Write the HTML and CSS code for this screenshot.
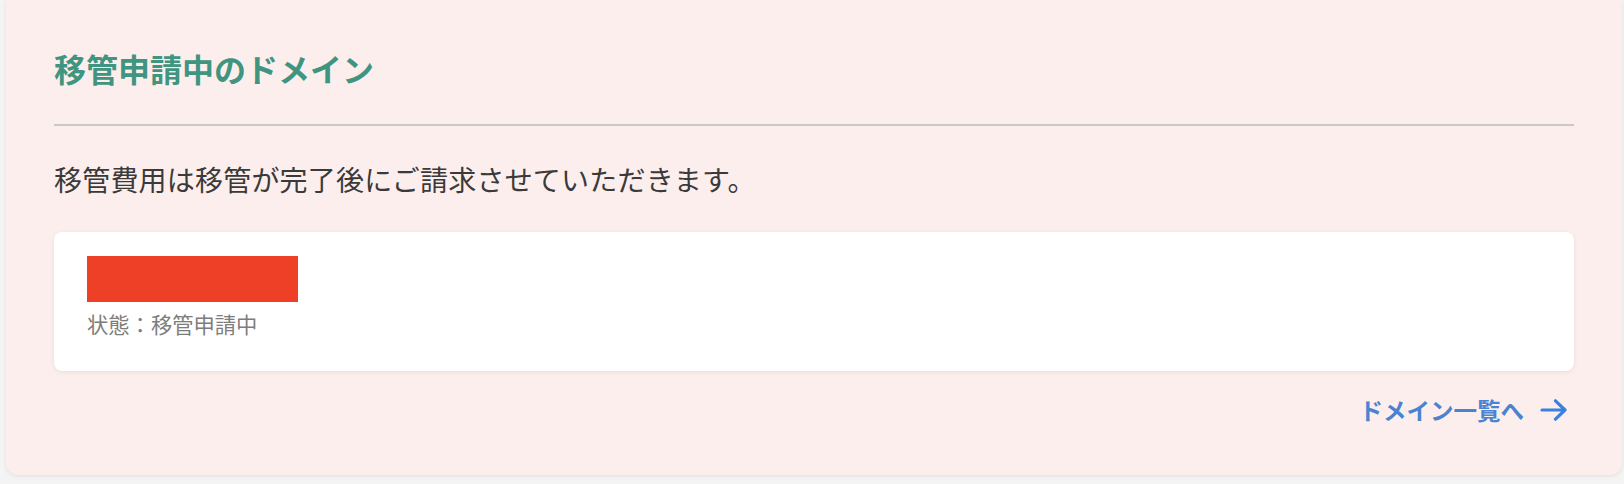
FILE: index.html
```html
<!DOCTYPE html>
<html lang="ja">
<head>
<meta charset="utf-8">
<title>移管申請中のドメイン</title>
<link rel="stylesheet" href="styles.css">
</head>
<body>
<section class="panel">
  <h2 class="panel-title">移管申請中のドメイン</h2>
  <hr class="divider">
  <p class="note">移管費用は移管が完了後にご請求させていただきます。</p>
  <div class="card">
    <div class="domain-mask"></div>
    <p class="status">状態：移管申請中</p>
  </div>
  <div class="footer">
    <a class="more-link" href="#">ドメイン一覧へ
      <svg class="arrow" width="28" height="22" viewBox="0 0 28 22" aria-hidden="true">
        <path d="M2 11 H25 M15.5 1.8 L25 11 L15.5 20.2" fill="none" stroke="currentColor" stroke-width="3.2" stroke-linecap="round" stroke-linejoin="round"/>
      </svg>
    </a>
  </div>
</section>
</body>
</html>
```
FILE: styles.css
```css
html, body {
  margin: 0;
  padding: 0;
}
body {
  background: #f4f4f4;
  font-family: "Noto Sans CJK JP", "Noto Sans", sans-serif;
  height: 484px;
  overflow: hidden;
}
.panel {
  margin: 0 2px 0 6px;
  background: #fdeeee;
  border-radius: 0 0 12px 12px;
  box-shadow: 0 1px 4px rgba(0, 0, 0, 0.09);
  padding: 44px 48px 47px;
}
.panel-title {
  margin: 0;
  font-size: 32px;
  line-height: 48px;
  font-weight: 700;
  color: #3f9580;
}
.divider {
  margin: 32px 0 0;
  border: 0;
  height: 2px;
  background: #c9c9c9;
}
.note {
  margin: 33px 0 0;
  font-size: 28px;
  letter-spacing: 0.2px;
  line-height: 41px;
  color: #3a3a3a;
}
.card {
  margin-top: 32px;
  background: #ffffff;
  border-radius: 8px;
  box-shadow: 0 1px 4px rgba(0, 0, 0, 0.08);
  padding: 24px 33px 31px;
}
.domain-mask {
  width: 211px;
  height: 46px;
  background: #ee4026;
}
.status {
  margin: 6px 0 0;
  font-size: 21.3px;
  line-height: 32px;
  color: #7d7d7d;
}
.footer {
  margin-top: 21px;
  display: flex;
  justify-content: flex-end;
  padding-right: 6px;
}
.more-link {
  display: flex;
  align-items: center;
  gap: 16px;
  font-size: 23.5px;
  line-height: 36px;
  font-weight: 700;
  color: #4a83cf;
  text-decoration: none;
}
.arrow {
  color: #3b80de;
  display: block;
}
```
